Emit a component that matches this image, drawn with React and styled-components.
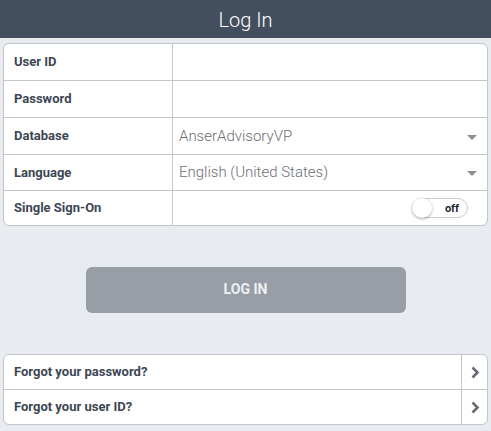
import React, { useState } from 'react'
import styled, { createGlobalStyle } from 'styled-components'

const Global = createGlobalStyle`
  html, body { margin: 0; padding: 0; background: #e8ecf0; }
  body { font-family: Roboto, "Noto Sans", Arial, sans-serif; }
  * { box-sizing: border-box; }
`;

const fields = [
  { label: 'User ID', type: 'text', h: 37 },
  { label: 'Password', type: 'text', h: 37 },
  { label: 'Database', type: 'select', value: 'AnserAdvisoryVP', h: 37 },
  { label: 'Language', type: 'select', value: 'English (United States)', h: 36 },
  { label: 'Single Sign-On', type: 'toggle', h: 34 },
];

function App() {
  const [sso, setsso] = useState(false);
  return (
    <Page>
      <Global />
      <Header>Log In</Header>
      <Body>
        <Table>
          {fields.map((f, ind) =>
            <Row key={ind} h={f.h} last={ind === fields.length - 1}>
              <Label>{f.label}</Label>
              <Value>
                {f.type === 'select' && <>
                  <span>{f.value}</span>
                  <Caret />
                </>}
                {f.type === 'toggle' &&
                  <Toggle onClick={() => setsso(v => !v)}>
                    <Knob />
                    <span>{sso ? 'on' : 'off'}</span>
                  </Toggle>}
              </Value>
            </Row>
          )}
        </Table>
        <ButtonWrap>
          <LoginButton>LOG IN</LoginButton>
        </ButtonWrap>
        <Table>
          {['Forgot your password?', 'Forgot your user ID?'].map((t, ind) =>
            <LinkRow key={ind} last={ind === 1}>
              <LinkText>{t}</LinkText>
              <Chevron>
                <svg width="9" height="13" viewBox="0 0 9 13">
                  <path d="M1.5 1.5 L6.5 6.5 L1.5 11.5" fill="none" stroke="#666c73" strokeWidth="2.6" />
                </svg>
              </Chevron>
            </LinkRow>
          )}
        </Table>
      </Body>
    </Page>
  )
}

const Page = styled.div`
  width: 491px;
  min-height: 431px;
  background: #e8ecf0;
`;
const Header = styled.div`
  height: 38px;
  background: #434e5e;
  color: #ffffff;
  font-size: 20px;
  font-weight: 300;
  display: flex; align-items: center; justify-content: center;
  padding-top: 1px;
`;
const Body = styled.div`
  padding: 5px 3px 0 3px;
`;
const Table = styled.div`
  background: #fff;
  border: 1px solid #c2c5c9;
  border-radius: 6px;
  overflow: hidden;
`;
const Row = styled.div`
  display: grid;
  grid-template-columns: 169px 1fr;
  height: ${p => p.h}px;
  border-bottom: ${p => p.last ? 'none' : '1px solid #c2c5c9'};
`;
const Label = styled.div`
  display: flex; align-items: center;
  padding-left: 10px;
  border-right: 1px solid #c2c5c9;
  font-size: 13px;
  font-weight: bold;
  color: #3d4653;
  padding-bottom: 1px;
`;
const Value = styled.div`
  display: flex; align-items: center; justify-content: space-between;
  padding: 0 10px 1px 6px;
  font-size: 15px;
  font-weight: 300;
  color: #6a6f75;
`;
const Caret = styled.div`
  width: 0; height: 0;
  border-left: 5px solid transparent;
  border-right: 5px solid transparent;
  border-top: 5px solid #8a8d91;
  margin-top: 3px;
`;
const Toggle = styled.div`
  margin-left: auto;
  margin-right: 9px;
  margin-top: 1px;
  width: 56px; height: 20px;
  border: 1px solid #c9ccd0;
  border-radius: 10px;
  display: flex; align-items: center; justify-content: space-between;
  padding-right: 8px;
  cursor: pointer;
  span { font-size: 11px; font-weight: bold; color: #1d2530; }
`;
const Knob = styled.div`
  width: 20px; height: 20px;
  margin-left: -1px;
  border-radius: 50%;
  background: #fff;
  box-shadow: 0 1px 3px rgba(0,0,0,0.35);
`;
const ButtonWrap = styled.div`
  display: flex; justify-content: center;
  padding: 41px 0 41px 0;
`;
const LoginButton = styled.button`
  width: 320px; height: 46px;
  border: none;
  border-radius: 6px;
  background: #979ea6;
  color: #eef0f2;
  font-family: Roboto, Arial, sans-serif;
  font-size: 14px;
  font-weight: bold;
  padding-bottom: 3px;
`;
const LinkRow = styled.div`
  display: grid;
  grid-template-columns: 1fr 25px;
  height: ${p => p.last ? '34px' : '35px'};
  border-bottom: ${p => p.last ? 'none' : '1px solid #c2c5c9'};
`;
const LinkText = styled.div`
  display: flex; align-items: center;
  padding-left: 10px;
  font-size: 13px;
  font-weight: bold;
  color: #3d4653;
  border-right: 1px solid #c2c5c9;
  padding-bottom: 1px;
`;
const Chevron = styled.div`
  display: flex; align-items: center; justify-content: center;
  padding-left: 1px;
`;

export default App
